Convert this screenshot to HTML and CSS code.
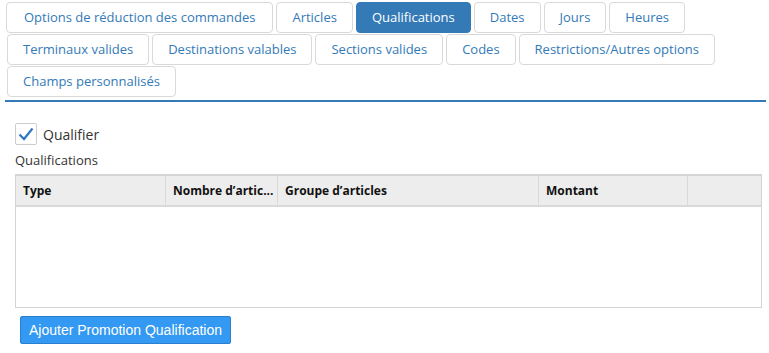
FILE: index.html
```html
<!DOCTYPE html>
<html lang="fr">
<head>
    <meta charset="UTF-8">
    <meta name="viewport" content="width=device-width, initial-scale=1.0">
    <title>Qualifications</title>
    <link rel="stylesheet" href="styles.css">
</head>
<body>
    <div class="tabs">
        <div class="tab-row">
            <a class="tab">Options de réduction des commandes</a>
            <a class="tab">Articles</a>
            <a class="tab active">Qualifications</a>
            <a class="tab">Dates</a>
            <a class="tab">Jours</a>
            <a class="tab">Heures</a>
        </div>
        <div class="tab-row">
            <a class="tab">Terminaux valides</a>
            <a class="tab">Destinations valables</a>
            <a class="tab">Sections valides</a>
            <a class="tab">Codes</a>
            <a class="tab">Restrictions/Autres options</a>
        </div>
        <div class="tab-row">
            <a class="tab">Champs personnalisés</a>
        </div>
    </div>

    <div class="content">
        <label class="check">
            <span class="check-box">
                <svg width="16" height="14" viewBox="0 0 16 14"><path d="M1.5 7.5 L6 12 L14.5 1.5" fill="none" stroke="#2f78c4" stroke-width="2.2"/></svg>
            </span>
            Qualifier
        </label>
        <div class="section-label">Qualifications</div>

        <div class="grid">
            <div class="grid-head">
                <div class="col col-type">Type</div>
                <div class="col col-nb">Nombre d’artic...</div>
                <div class="col col-grp">Groupe d’articles</div>
                <div class="col col-mt">Montant</div>
                <div class="col col-end"></div>
            </div>
            <div class="grid-body"></div>
        </div>

        <button class="btn-add">Ajouter Promotion Qualification</button>
    </div>
</body>
</html>
```

FILE: styles.css
```css
body {
    margin: 0;
    padding: 2px 3px 0 5px;
    font-family: "Open Sans", sans-serif;
    font-size: 13px;
    color: #333;
    background: #fff;
}
.tabs {
    border-bottom: 2px solid #337ab7;
    padding-bottom: 2px;
}
.tab-row {
    display: flex;
    gap: 3px;
    padding-left: 1px;
    margin-bottom: 1px;
}
.tab-row + .tab-row {
    padding-left: 2px;
}
.tab {
    display: block;
    height: 29px;
    line-height: 29px;
    padding: 0 15px;
    border: 1px solid #d9d9d9;
    border-radius: 4px;
    color: #337ab7;
    background: #fff;
    white-space: nowrap;
}
.tab-row:first-child .tab:first-child {
    padding: 0 17px;
}
.tab.active {
    background: #337ab7;
    border-color: #337ab7;
    color: #fff;
}
.content {
    padding: 21px 0 0 10px;
}
.check {
    display: flex;
    align-items: center;
    gap: 6px;
    font-size: 14px;
    height: 22px;
}
.check-box {
    width: 20px;
    height: 20px;
    border: 1px solid #ccc;
    border-radius: 2px;
    display: flex;
    align-items: center;
    justify-content: center;
}
.section-label {
    margin-top: 6px;
    font-size: 13px;
    line-height: 18px;
}
.grid {
    margin-top: 5px;
    width: 745px;
    border: 2px solid #d4d4d4;
    border-width: 2px 1px 1px 1px;
}
.grid-head {
    display: flex;
    height: 29px;
    background: #ededed;
    border-bottom: 2px solid #d9d9d9;
    font-weight: bold;
    font-size: 12px;
    color: #111;
}
.col {
    display: flex;
    align-items: center;
    padding-left: 7px;
    border-right: 1px solid #d9d9d9;
    white-space: nowrap;
    overflow: hidden;
}
.col-type { width: 142px; }
.col-nb { width: 104px; }
.col-grp { width: 253px; }
.col-mt { width: 141px; }
.col-end { flex: 1; border-right: none; }
.grid-body {
    height: 100px;
    background: #fff;
}
.btn-add {
    margin: 8px 0 0 5px;
    height: 28px;
    padding: 0 8px;
    background: #3399f3;
    border: 1px solid #2a80cf;
    border-radius: 2px;
    color: #fff;
    font-family: "Liberation Sans", Arial, sans-serif;
    font-size: 14px;
}
```
